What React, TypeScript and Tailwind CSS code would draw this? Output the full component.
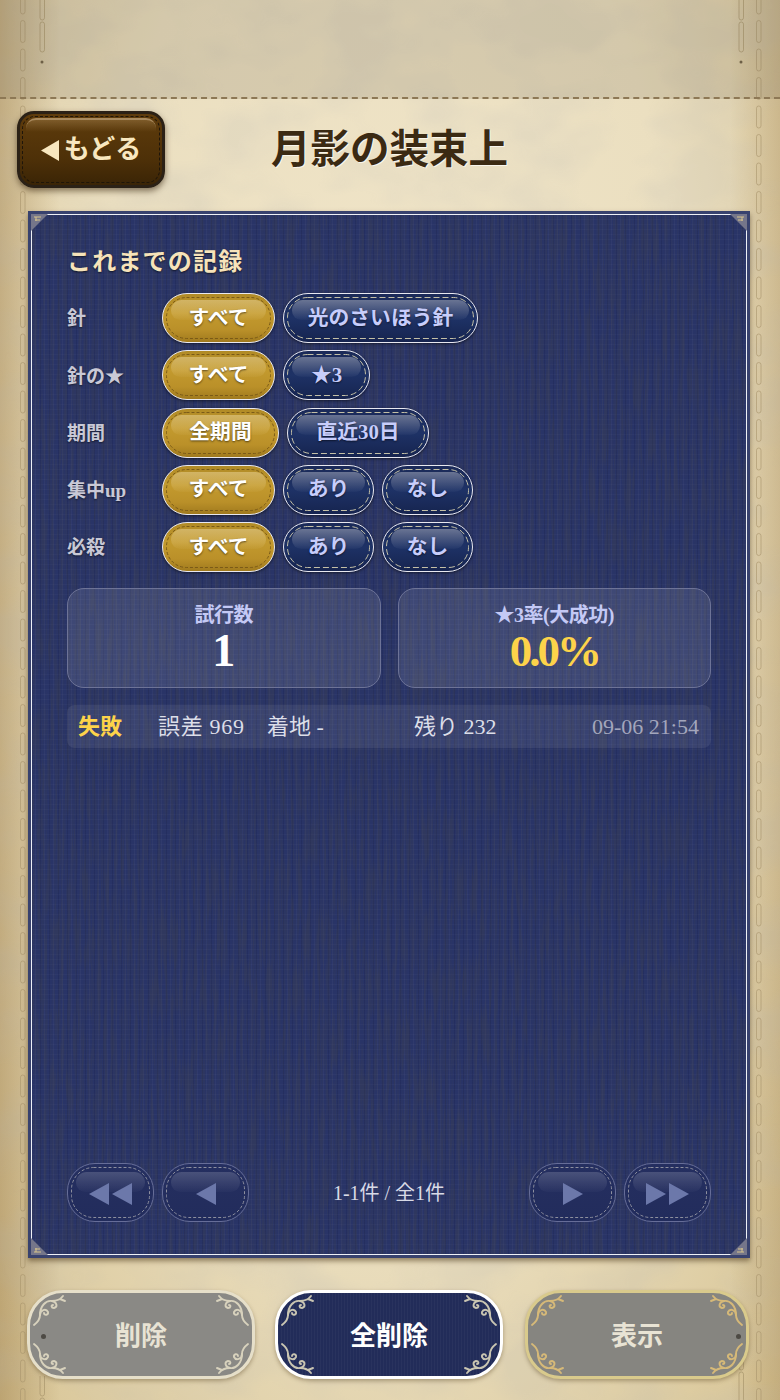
import type { ReactNode } from "react"

const denimLines =
  "bg-[#293467] bg-[image:repeating-linear-gradient(90deg,rgba(8,12,50,.14)_0px,rgba(8,12,50,.14)_1px,transparent_1px,transparent_4px,rgba(255,255,255,.03)_4px,rgba(255,255,255,.03)_5px,transparent_5px,transparent_9px),repeating-linear-gradient(0deg,rgba(255,255,255,.025)_0px,rgba(255,255,255,.025)_1px,transparent_1px,transparent_5px)]"

function Noise({ id, freq, color, opacity }: { id: string; freq: string; color: string; opacity: number }) {
  return (
    <svg className="pointer-events-none absolute inset-0 h-full w-full" style={{ opacity }}>
      <filter id={id}>
        <feTurbulence type="fractalNoise" baseFrequency={freq} numOctaves="3" seed="4" />
        <feColorMatrix values={`0 0 0 0 ${color} 0 0 0 0 ${color} 0 0 0 0 ${color} 0 0 0 -3 1.9`} />
      </filter>
      <rect width="100%" height="100%" filter={`url(#${id})`} />
    </svg>
  )
}

function Stitches({ x, top, height }: { x: number; top: number; height: number }) {
  const count = Math.ceil(height / 28.5)
  return (
    <svg className="absolute" style={{ left: x, top }} width="10" height={height} fill="none">
      {Array.from({ length: count }).map((_, i) => (
        <rect key={i} x="2.5" y={i * 28.5 + 1} width="4.5" height="22" rx="2.25" stroke="#a8956c" strokeOpacity=".6" strokeWidth="1" />
      ))}
    </svg>
  )
}

function Stitch({ w, h, r, color, dash = "5 3" }: { w: number; h: number; r: number; color: string; dash?: string }) {
  return (
    <svg className="absolute left-0 top-0" width={w} height={h} fill="none">
      <rect x="3.5" y="3.5" width={w - 7} height={h - 7} rx={r} stroke={color} strokeWidth="1" strokeDasharray={dash} />
    </svg>
  )
}

function Pill({ children, gold, w, width }: { children: ReactNode; gold?: boolean; w: number; width: string }) {
  return (
    <button
      className={`relative h-[50px] ${width} shrink-0 overflow-hidden rounded-[25px] border border-[#e8e8f0] pt-[3px] shadow-[0_1px_3px_rgba(0,0,0,.5)] ${
        gold
          ? "bg-[linear-gradient(#b08a26,#c39a2e_40%,#ba9029_75%,#a07a1e)]"
          : "bg-[linear-gradient(#1b2a58,#1e3266_50%,#16244f)]"
      }`}
    >
      <Stitch w={w - 2} h={48} r={20} color={gold ? "#7a5a18" : "#c4c0a6"} dash={gold ? "3 2" : "6 3"} />
      <span
        className={`absolute left-[8px] right-[8px] top-[6px] h-[20px] rounded-t-[16px] rounded-b-[14px] ${
          gold
            ? "bg-[linear-gradient(rgba(255,240,200,.38),rgba(255,240,200,.03))]"
            : "bg-[linear-gradient(rgba(255,255,255,.34),rgba(255,255,255,.02))]"
        }`}
      />
      <span
        className={`relative text-[20.8px] font-bold leading-none [text-shadow:0_1px_2px_rgba(0,0,0,.55)] ${
          gold ? "text-white" : "text-[#c7cdfb]"
        }`}
      >
        {children}
      </span>
    </button>
  )
}

function FilterRow({ label, children }: { label: string; children: ReactNode }) {
  return (
    <div className="flex h-[50px] items-center gap-[8px]">
      <div className="w-[87px] shrink-0 pt-[3px] text-[19px] font-bold text-[#c9c9d6] [text-shadow:0_1px_2px_rgba(0,0,0,.5)]">{label}</div>
      {children}
    </div>
  )
}

function Triangle({ dir }: { dir: "l" | "r" }) {
  return (
    <svg width="20" height="22" viewBox="0 0 20 22">
      <path d={dir === "l" ? "M20 0V22L0 11Z" : "M0 0V22L20 11Z"} fill="#6c78aa" />
    </svg>
  )
}

function PageButton({ dir, double }: { dir: "l" | "r"; double?: boolean }) {
  return (
    <button className="relative flex h-[59px] w-[87px] items-center justify-center overflow-hidden rounded-[28px] border border-[#666d98] bg-[linear-gradient(#252f60,#222c5c)]">
      <Stitch w={85} h={57} r={22} color="#8d8f9e" dash="3 2" />
      <span className="absolute left-[8px] right-[8px] top-[8px] h-[20px] rounded-t-[16px] rounded-b-[14px] bg-[linear-gradient(rgba(255,255,255,.17),rgba(255,255,255,.02))]" />
      <span className="relative flex items-center gap-[3px] pt-[2px]">
        <Triangle dir={dir} />
        {double && <Triangle dir={dir} />}
      </span>
    </button>
  )
}

function Curl({ color, className }: { color: string; className: string }) {
  return (
    <svg className={`absolute h-[36px] w-[36px] ${className}`} viewBox="0 0 36 36" fill="none" stroke={color} strokeWidth="1.9" strokeLinecap="round">
      <path d="M2 31C6 28 8 25 8 21C8 16 14 14 16 18C17 21 12 22 12 19" />
      <path d="M8 21C8 12 14 6 20 7C25 8 26 13 22 14C19 14 19 11 21 11" />
      <path d="M20 7C24 7 28 6 31 2M28 5L33 7" />
    </svg>
  )
}

function ActionButton({ label, variant }: { label: string; variant: "gray" | "navy" | "gold" }) {
  const look = {
    gray: "w-[228px] border-[#e6dfc9] bg-[#8a8985] text-[#e8e3d4]",
    navy: "w-[228px] border-white bg-[#222c59] bg-[image:repeating-linear-gradient(90deg,rgba(255,255,255,.03)_0px,rgba(255,255,255,.03)_1px,transparent_1px,transparent_3px)] text-white",
    gold: "w-[224px] border-[#d9ca8c] bg-[#868580] text-[#e8e3d4]",
  }[variant]
  const curl = variant === "gold" ? "#d6b978" : variant === "navy" ? "#c9c5b2" : "#d8d2bd"
  return (
    <button className={`relative flex h-[89px] items-center justify-center rounded-[36px] border-[3px] pt-[3px] text-[26px] font-bold shadow-[0_2px_4px_rgba(60,40,10,.35)] ${look}`}>
      <Curl color={curl} className="left-[2px] top-[1px]" />
      <Curl color={curl} className="right-[2px] top-[1px] -scale-x-100" />
      <Curl color={curl} className="bottom-[1px] left-[2px] -scale-y-100" />
      <Curl color={curl} className="bottom-[1px] right-[2px] -scale-100" />
      {variant === "gray" && <span className="absolute left-[11px] top-[41px] h-[5px] w-[5px] rounded-full bg-[#4d4a44]" />}
      {variant === "gold" && <span className="absolute right-[5px] top-[41px] h-[5px] w-[5px] rounded-full bg-[#4d4a44]" />}
      <span className="relative">{label}</span>
    </button>
  )
}

function PanelCorner({ className }: { className: string }) {
  return (
    <svg className={`absolute h-[17px] w-[17px] ${className}`} viewBox="0 0 17 17">
      <path d="M0 0H17L0 17Z" fill="#75768a" />
      <path d="M3 3H10M4 6H9M5 3V7" stroke="#d8c48c" strokeWidth="1" fill="none" />
    </svg>
  )
}

function Chain({ className }: { className: string }) {
  return (
    <svg className={`absolute ${className}`} width="8" height="66" fill="none" stroke="#a8956c" strokeOpacity=".7">
      <rect x="2" y="-6" width="4.5" height="26" rx="2.2" />
      <rect x="2" y="22" width="4.5" height="30" rx="2.2" />
      <circle cx="4" cy="62" r="1.5" fill="#6d5f45" stroke="none" />
    </svg>
  )
}

export default function App() {
  return (
    <div className="relative flex h-[1400px] w-[780px] flex-col overflow-hidden bg-[#e9dcb9] bg-[image:radial-gradient(ellipse_at_50%_35%,#f0e5c9_0%,#ebdfc0_55%,#d8c596_100%),linear-gradient(#e9dcb9,#e9dcb9)] [font-family:'Liberation_Serif','Noto_Sans_CJK_JP',serif]">
      <div className="absolute inset-y-0 left-0 w-[60px] bg-[linear-gradient(90deg,rgba(140,105,50,.36),transparent)]" />
      <div className="absolute inset-y-0 right-0 w-[50px] bg-[linear-gradient(270deg,rgba(140,105,50,.26),transparent)]" />
      <Noise id="paper" freq="0.012 0.018" color="0.45" opacity={0.14} />
      <Stitches x={18} top={-9} height={1410} />
      <Stitches x={754} top={-9} height={1410} />
      <Chain className="left-[38px] top-0" />
      <Chain className="right-[35px] top-0" />
      <Chain className="left-[38px] top-[1376px]" />
      <Chain className="right-[35px] top-[1350px]" />

      {/* top band */}
      <div className="relative h-[99px] shrink-0 border-b-2 border-dashed border-[#8d7855] bg-[rgba(110,100,75,.18)]" />

      {/* header */}
      <div className="relative mt-[12px] flex h-[76px] shrink-0 items-center px-[17px]">
        <button className="relative flex h-[77px] w-[148px] items-center justify-center overflow-hidden rounded-[17px] border-[3px] border-[#2b2116] bg-[linear-gradient(#5f3c0c,#4d3008_65%,#3a2406)] shadow-[0_3px_6px_rgba(50,30,5,.55)]">
          <span className="absolute inset-[2px] rounded-[13px] border border-dashed border-[#1e150a]" />
          <span className="absolute left-[6px] right-[6px] top-[4px] h-[14px] rounded-t-[10px] border-t-2 border-[#a98a5e] bg-[linear-gradient(rgba(255,220,160,.2),transparent)]" />
          <span className="relative flex items-center gap-[5px] pt-[2px] text-[26px] font-bold leading-none text-[#f8e7bf]">
            <svg width="18" height="21" viewBox="0 0 18 21"><path d="M18 0V21L0 10.5Z" fill="#f8e7bf" /></svg>
            もどる
          </span>
        </button>
        <h1 className="ml-[106px] pt-[4px] text-[39.5px] font-bold leading-none text-[#3b2a13] [text-shadow:1px_1px_0_rgba(255,255,255,.7)]">月影の装束上</h1>
      </div>

      {/* panel */}
      <div className={`relative ml-[28px] mt-[24px] h-[1047px] w-[722px] shrink-0 border-[3px] border-[#38426e] shadow-[0_3px_5px_rgba(60,40,10,.5)] ${denimLines}`}>
        <Noise id="denim" freq="0.3 0.02" color="0.06" opacity={0.26} />
        <div className="absolute inset-0 border-[1.5px] border-[#eef0f6]" />
        <PanelCorner className="left-0 top-0" />
        <PanelCorner className="right-0 top-0 -scale-x-100" />
        <PanelCorner className="bottom-0 left-0 -scale-y-100" />
        <PanelCorner className="bottom-0 right-0 -scale-100" />

        <div className="relative flex h-full flex-col px-[36px] pt-[32px]">
          <h2 className="text-[24px] font-bold leading-[32px] tracking-[1.2px] text-[#f6e3ba] [text-shadow:0_1px_2px_rgba(0,0,0,.6)]">これまでの記録</h2>

          <div className="mt-[15px] flex flex-col gap-[7.3px]">
            <FilterRow label="針">
              <Pill gold w={113} width="w-[113px]">すべて</Pill>
              <Pill w={195} width="w-[195px]">光のさいほう針</Pill>
            </FilterRow>
            <FilterRow label="針の★">
              <Pill gold w={113} width="w-[113px]">すべて</Pill>
              <Pill w={87} width="w-[87px]">★3</Pill>
            </FilterRow>
            <FilterRow label="期間">
              <Pill gold w={117} width="w-[117px]">全期間</Pill>
              <Pill w={142} width="w-[142px]">直近30日</Pill>
            </FilterRow>
            <FilterRow label="集中up">
              <Pill gold w={113} width="w-[113px]">すべて</Pill>
              <Pill w={91} width="w-[91px]">あり</Pill>
              <Pill w={91} width="w-[91px]">なし</Pill>
            </FilterRow>
            <FilterRow label="必殺">
              <Pill gold w={113} width="w-[113px]">すべて</Pill>
              <Pill w={91} width="w-[91px]">あり</Pill>
              <Pill w={91} width="w-[91px]">なし</Pill>
            </FilterRow>
          </div>

          <div className="mt-[16px] grid grid-cols-2 gap-[17px]">
            <div className="flex h-[100px] flex-col items-center rounded-[17px] border border-[#6d7397] bg-white/10 pt-[12px]">
              <div className="text-[20px] font-bold leading-[28px] tracking-[-.5px] text-[#c4c9f5]">試行数</div>
              <div className="-mt-[2px] text-[46px] font-bold leading-[48px] text-white">1</div>
            </div>
            <div className="flex h-[100px] flex-col items-center rounded-[17px] border border-[#6d7397] bg-white/10 pt-[12px]">
              <div className="text-[20px] font-bold leading-[28px] tracking-[-.5px] text-[#c4c9f5]">★3率(大成功)</div>
              <div className="-mt-[2px] text-[45px] font-bold leading-[48px] tracking-[-3px] text-[#fdd34a]">0.0%</div>
            </div>
          </div>

          <div className="mt-[17px] flex h-[43px] items-center rounded-[8px] bg-white/[.07] pl-[11px] pr-[12px] text-[22px] text-[#dcdee8]">
            <span className="w-[80px] font-bold text-[#fdd34a]">失敗</span>
            <span className="w-[109px] tracking-[.7px]">誤差 969</span>
            <span className="w-[147px]">着地 -</span>
            <span>残り 232</span>
            <span className="ml-auto text-[#a3a6bc]">09-06 21:54</span>
          </div>

          <div className="absolute inset-x-[36px] bottom-[33px] flex items-center gap-[8px]">
            <PageButton dir="l" double />
            <PageButton dir="l" />
            <div className="flex-1 text-center text-[20px] text-[#d8dae6]">1-1件 / 全1件</div>
            <PageButton dir="r" />
            <PageButton dir="r" double />
          </div>
        </div>
      </div>

      {/* actions */}
      <div className="relative mt-[32px] flex justify-start gap-[20px] pl-[27px]">
        <ActionButton label="削除" variant="gray" />
        <ActionButton label="全削除" variant="navy" />
        <div className="ml-[2px]">
          <ActionButton label="表示" variant="gold" />
        </div>
      </div>
    </div>
  )
}
